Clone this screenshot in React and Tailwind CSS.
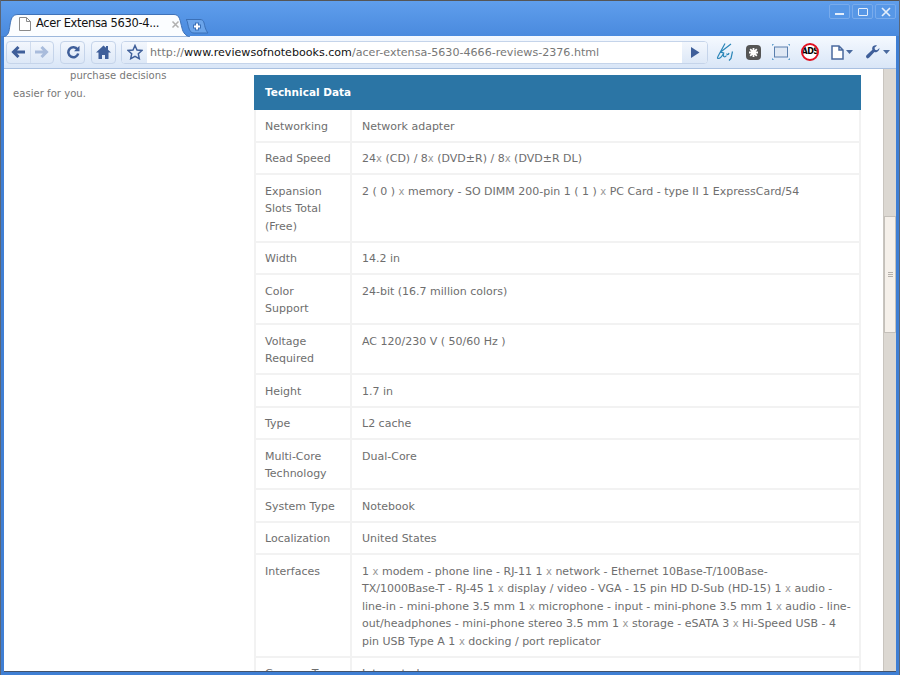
import React from "react";

const rows = [
  ["Networking", "Network adapter"],
  ["Read Speed", "24x (CD) / 8x (DVD±R) / 8x (DVD±R DL)"],
  ["Expansion Slots Total (Free)", "2 ( 0 ) x memory - SO DIMM 200-pin 1 ( 1 ) x PC Card - type II 1 ExpressCard/54"],
  ["Width", "14.2 in"],
  ["Color Support", "24-bit (16.7 million colors)"],
  ["Voltage Required", "AC 120/230 V ( 50/60 Hz )"],
  ["Height", "1.7 in"],
  ["Type", "L2 cache"],
  ["Multi-Core Technology", "Dual-Core"],
  ["System Type", "Notebook"],
  ["Localization", "United States"],
  ["Interfaces", "1 x modem - phone line - RJ-11 1 x network - Ethernet 10Base-T/100Base-\nTX/1000Base-T - RJ-45 1 x display / video - VGA - 15 pin HD D-Sub (HD-15) 1 x audio -\nline-in - mini-phone 3.5 mm 1 x microphone - input - mini-phone 3.5 mm 1 x audio - line-\nout/headphones - mini-phone stereo 3.5 mm 1 x storage - eSATA 3 x Hi-Speed USB - 4\npin USB Type A 1 x docking / port replicator"],
  ["Camera Type", "Integrated"],
];

function Val({ text }) {
  const parts = text.split(/(?<=\d|\d |\) )x(?= )/);
  return (
    <>
      {parts.map((p, i) => (
        <React.Fragment key={i}>
          {i > 0 && <span className="text-[10px] leading-[10px] text-[#999]">x</span>}
          {p}
        </React.Fragment>
      ))}
    </>
  );
}

function Btn({ children, className = "" }) {
  return (
    <div className={"h-[23px] flex items-center justify-center rounded-[4px] border border-[#c5d4ea] bg-gradient-to-b from-[#f3f7fd] to-[#dde8f7] " + className}>
      {children}
    </div>
  );
}

function Caret() {
  return <svg width="7" height="4" viewBox="0 0 7 4"><path d="M0 0h7L3.500 4z" fill="#4a6a9f" /></svg>;
}

function WinBtn({ children }) {
  return (
    <div className="w-[21px] h-[15px] rounded-[2px] border border-[#78abec] bg-[#5797e6] flex items-center justify-center">
      {children}
    </div>
  );
}

export default function App() {
  return (
    <div className="w-[900px] h-[675px] overflow-hidden flex flex-col bg-[#3f7fd4] border-x border-[#5a6678] font-['DejaVu_Sans',sans-serif]">
      <div className="h-[36px] shrink-0 flex items-end bg-gradient-to-b from-[#5f9eec] to-[#4a8ade] border-t border-[#555] relative -mx-px">
        <svg className="absolute left-0 top-0" width="212" height="36" viewBox="0 0 212 36">
          <path d="M3 36C9 35 9 30 10 24 11 18 12 13.500 18 13.500H174C180 13.500 180 20 182 27 183 32 186 35 190 36Z" fill="#fbfdff" stroke="#3f72b8" />
          <path d="M186 18.500H200C204 18.500 204 22 205 26 206 29 207 31 208 32H194C190 32 189 28 188 24 187.500 21 187 19 186 18.500Z" fill="#6ba4ea" stroke="#3a70b8" />
          <path d="M197 21.500v8M193 25.500h8" stroke="#3a70b8" strokeWidth="4" />
          <path d="M197 22.500v6M194 25.500h6" stroke="#fff" strokeWidth="2" />
        </svg>
        <div className="relative w-[192px] h-[22px] flex items-center pl-[19px] gap-[5px] mb-[1px]">
          <svg className="shrink-0" width="12" height="14" viewBox="0 0 12 14"><path d="M.5.500h7l4 4v9h-11zM7.500.500v4h4" fill="#fff" stroke="#8a8a8a" /></svg>
          <span className="text-[11.500px] text-[#111] whitespace-nowrap tracking-[-0.35px] w-[130px] shrink-0">Acer Extensa 5630-4...</span>
          <svg className="shrink-0" width="9" height="9" viewBox="0 0 9 9"><path d="M1.500 1.500l6 6M7.500 1.500l-6 6" stroke="#b0b0b0" strokeWidth="1.500" /></svg>
        </div>
        <div className="absolute right-[4px] top-[3px] flex gap-[2px]">
          <WinBtn><div className="w-[9px] h-[2px] mt-[4px] bg-[#e4eefb]" /></WinBtn>
          <WinBtn><div className="w-[10px] h-[8px] rounded-[1px] border-[1.500px] border-[#e4eefb]" /></WinBtn>
          <WinBtn><svg width="10" height="10" viewBox="0 0 10 10"><path d="M1 1l8 8M9 1l-8 8" stroke="#e4eefb" strokeWidth="1.700" /></svg></WinBtn>
        </div>
      </div>
      <div className="h-[33px] shrink-0 mx-[3px] flex items-center pl-[2px] bg-gradient-to-b from-[#f5f9ff] to-[#d9e6f7] border-b border-[#a9c0e0]">
        <Btn className="w-[48px]">
          <div className="w-[24px] h-full border-r border-[#d0dcee] flex items-center justify-center">
            <svg width="14" height="12" viewBox="0 0 14 12"><path d="M14 6H3M7.500 1 2.500 6l5 5" stroke="#3f5f9a" strokeWidth="3" fill="none" /></svg>
          </div>
          <div className="w-[23px] flex items-center justify-center">
            <svg width="14" height="12" viewBox="0 0 14 12"><path d="M0 6h11M6.500 1l5 5-5 5" stroke="#a9bcdc" strokeWidth="3" fill="none" /></svg>
          </div>
        </Btn>
        <Btn className="w-[25px] ml-[6px]">
          <svg width="14" height="14" viewBox="0 0 14 14"><path d="M11.500 4.500a5 5 0 1 0 .7 4" stroke="#3f5f9a" strokeWidth="2.500" fill="none" /><path d="M13.500 .8v5.500H8z" fill="#3f5f9a" /></svg>
        </Btn>
        <Btn className="w-[25px] ml-[6px]">
          <svg width="15" height="14" viewBox="0 0 15 14"><path d="M7.500 .5 0 7.500h2.500V14h3.500v-4h3v4h3.500V7.500H15l-3-2.800V1h-2v1.800z" fill="#3f5f9a" /></svg>
        </Btn>
        <div className="ml-[5px] w-[587px] shrink-0 h-[23px] flex rounded-[4px] border border-[#c5d4ea] bg-white overflow-hidden">
          <div className="w-[25px] bg-gradient-to-b from-[#f3f7fd] to-[#dde8f7] flex items-center justify-center">
            <svg width="16" height="16" viewBox="0 0 16 16"><path d="m8 1.500 2 4.500 5 .5-3.700 3.300 1 4.900L8 12.300l-4.300 2.400 1-4.900L1 6.500 6 6z" fill="none" stroke="#3f5f9a" strokeWidth="1.500" /></svg>
          </div>
          <div className="flex-1 pl-[3px] text-[11.100px] leading-[21px] text-[#777] whitespace-nowrap">
            http://<span className="text-[#111]">www.reviewsofnotebooks.com</span>/acer-extensa-5630-4666-reviews-2376.html
          </div>
          <div className="w-[25px] bg-gradient-to-b from-[#f3f7fd] to-[#dde8f7] flex items-center justify-center">
            <svg width="10" height="11" viewBox="0 0 10 11"><path d="M1 0l8.500 5.500L1 11z" fill="#3f5f9a" /></svg>
          </div>
        </div>
        <div className="ml-[3px] flex items-center">
          <div className="w-[28px] flex justify-center">
            <svg width="18" height="18" viewBox="0 0 18 18"><path d="M9 .5 3 11.500c-1 2-2.500 4-.5 4s4-3 5.500-6M15 1 4 9.500c3-.5 4 .5 3.500 2.500-.3 2 1.500 2.500 3 .5M11 10.500c-.5 1.500 1.500 1.500 2-.5M16.500 8.500l-1.500 7-2 2" stroke="#2b86b8" strokeWidth="1.200" fill="none" /></svg>
          </div>
          <div className="w-[28px] flex justify-center">
            <div className="w-[15px] h-[15px] rounded-[4px] bg-[#555] flex items-center justify-center">
              <svg width="9" height="9" viewBox="0 0 9 9"><path d="M4.500 0v9M0 4.500h9M1.200 1.200l6.600 6.600M7.800 1.200 1.200 7.800" stroke="#fff" strokeWidth="1.800" /></svg>
            </div>
          </div>
          <div className="w-[28px] flex justify-center">
            <svg width="18" height="16" viewBox="0 0 18 16">
              <rect x="2.500" y="3" width="13" height="10" fill="#dfe8f4" stroke="#5a7fae" />
              <path d="M0 2V0h2M16 0h2v2M18 14v2h-2M2 16H0v-2" stroke="#3f8abf" fill="none" strokeWidth="1" />
            </svg>
          </div>
          <div className="w-[28px] ml-[1px] flex justify-center">
            <div className="w-[18px] h-[18px] rounded-full border-[2.500px] border-[#e01020] bg-white flex items-center justify-center overflow-hidden">
              <span className="text-[8px] font-bold text-black leading-none tracking-[-0.5px]">ADS</span>
            </div>
          </div>
          <div className="w-[36px] flex justify-center items-center gap-[2px]">
            <svg width="13" height="15" viewBox="0 0 13 15"><path d="M1 1h7l4 4v9H1zM8 1v4h4" fill="#fff" stroke="#4a6a9f" strokeWidth="1.500" /></svg>
            <Caret />
          </div>
          <div className="w-[36px] flex justify-center items-center gap-[3px]">
            <svg width="14" height="14" viewBox="0 0 14 14"><path d="M13.500 3 11 5.200 9 4.700l-.5-2L11 .5C9 -.300 6.500.800 6.200 3c-.1.700 0 1.300.2 1.800L.8 10c-1 1-1 2-.3 2.800.8.900 2 .7 2.800-.2l5.100-5.500c.6.200 1.200.2 1.800.1 2.200-.4 3.300-2.700 3.300-4.200z" fill="#3f5f9a" /></svg>
            <Caret />
          </div>
        </div>
      </div>
      <div className="flex-1 min-h-0 mx-[3px] bg-white flex overflow-hidden border-b border-[#43536b]">
        <div className="flex-1 min-w-0 flex overflow-hidden">
          <div className="w-[250px] shrink-0 pl-[9px] -mt-[2px] text-[10px] leading-[18px] tracking-[0.05px] text-[#777]">
            <div className="pl-[57px]">purchase decisions</div>
            <div>easier for you.</div>
          </div>
          <div className="w-[607px] shrink-0 pt-[6px]">
            <div className="h-[35px] bg-[#2b75a5] text-white font-bold text-[10.500px] leading-[35px] pl-[11px]">Technical Data</div>
            <div className="border-x-2 border-[#f2f2f2] text-[11px] leading-[17.500px] text-[#6e6e6e]">
              {rows.map(([k, v]) => (
                <div key={k} className="flex border-b-2 border-[#f2f2f2]">
                  <div className="w-[96px] shrink-0 border-r-2 border-[#f2f2f2] pl-[9px] pr-[12px] pt-[7.750px] pb-[5.250px]">{k}</div>
                  <div className="flex-1 pl-[10px] pr-[6px] pt-[7.750px] pb-[5.250px] whitespace-pre-line"><Val text={v} /></div>
                </div>
              ))}
            </div>
          </div>
        </div>
        <div className="w-[13px] shrink-0 bg-[#dcd8d2] pt-[147px] border-l border-[#c9c5bf]">
          <div className="h-[117px] border border-[#c4c0ba] bg-[#f5f0ea] flex flex-col items-center justify-center gap-[1px]">
            <div className="w-[5px] h-px bg-[#b5b0aa]" /><div className="w-[5px] h-px bg-[#b5b0aa]" /><div className="w-[5px] h-px bg-[#b5b0aa]" />
          </div>
        </div>
      </div>
      <div className="h-[3px] shrink-0" />
    </div>
  );
}
